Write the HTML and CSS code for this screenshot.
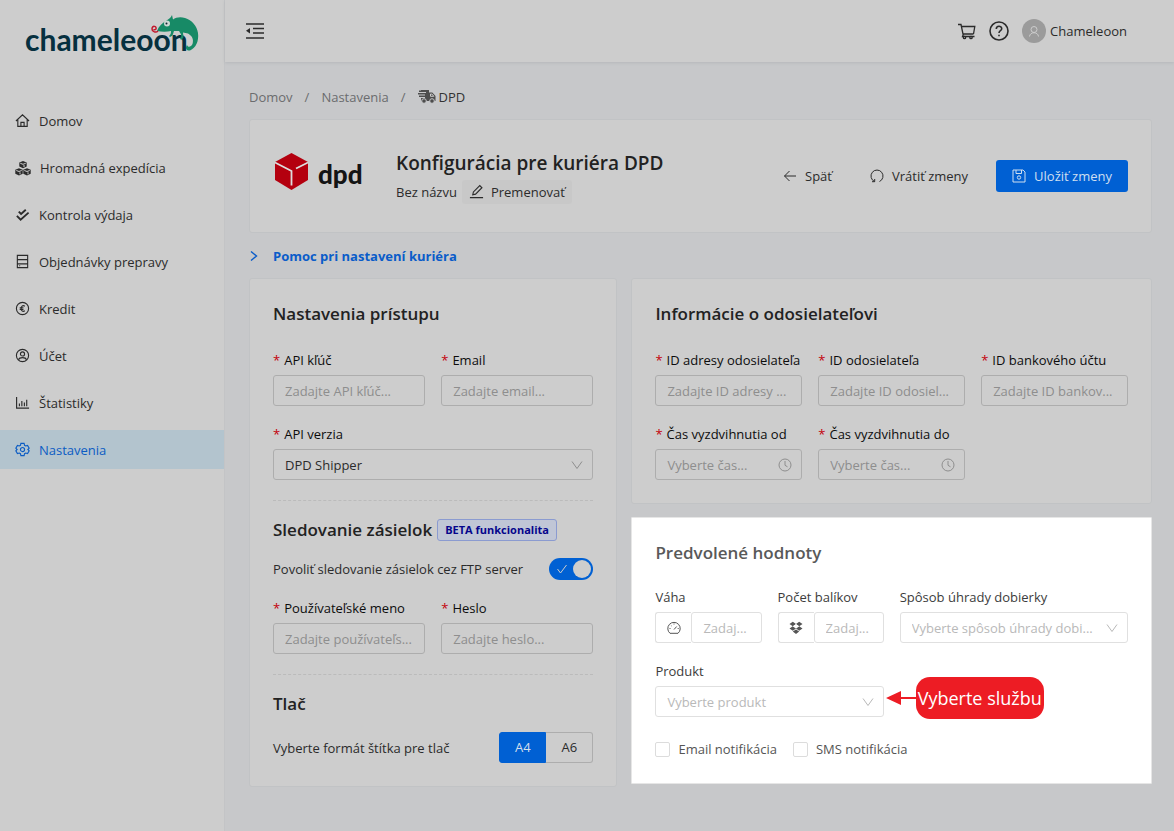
FILE: index.html
```html
<!DOCTYPE html>
<html lang="sk">
<head>
<meta charset="utf-8">
<meta name="viewport" content="width=device-width, initial-scale=1">
<title>Chameleoon – DPD</title>
<link rel="stylesheet" href="styles.css">
</head>
<body>
<div class="app">
  <aside class="sidebar">
    <a class="brand" href="#" aria-label="chameleoon">
      <svg width="180" height="48" viewBox="0 0 180 48">
        <text class="brand-text" x="3" y="39">chameleoon</text>
        <path fill="#178a66" d="M135 19C137 14 140 11 144 9C146 7 149 6 150 3L151 7.500C154 5 159 4.500 163 6C170 8 175 14 176 21C177 29 174 36 168 38.500C164 39 163 36 165 33C166 36 169 35 170.500 32C172 27 170 24 166 21.500L161 20.500C161 24 163 25 159 28L158 26C161 24 158 21 157 19L152 19C151 22 151 24 148 25L147 24C149 22 149 21 149 19C145 20 140 20 135 19Z"/>
        <circle cx="145" cy="11.500" r="3" fill="#cdd8d3" stroke="none"/><circle cx="144.500" cy="11.500" r="1" fill="#123" stroke="none"/>
        <path fill="none" stroke="#c2182c" stroke-width="1.500" d="M136 19C134 21 130 20 130 17C130 13 135 14 134 17C133 18 132 18 132 17"/>
      </svg>
    </a>
    <nav class="menu">
      <a href="#"><svg class="icon" viewBox="0 0 16 16"><path d="M1 8.500 8 2l7 6.500M3 7v7.300h10V7M6.300 14.300V10h3.400v4.300"/></svg>Domov</a>
      <a href="#"><svg class="icon icon-cubes" viewBox="0 0 16 16"><path class="solid" d="m8 1 3.700 1.500v4L8 8.200 4.300 6.500v-4zM4 8.200l3.700 1.500v4L4 15.400.3 13.700v-4zm8 0 3.700 1.500v4L12 15.400l-3.700-1.700v-4z"/><path class="cut" d="m5.300 3.300 2.700 1 2.700-1M9 5v2M1.300 10.500l2.700 1 2.700-1M5 12.300v2m4.300-3.800 2.700 1 2.700-1M13 12.300v2"/></svg>Hromadná expedícia</a>
      <a href="#"><svg class="icon" viewBox="0 0 16 16"><path class="bold" d="m4 5 2.500 2.500L11.500 3M2 9.500l4 4L14.500 6"/></svg>Kontrola výdaja</a>
      <a href="#"><svg class="icon" viewBox="0 0 16 16"><path d="M2.500 1.500h11v13h-11zM2.500 6h11M2.500 10.500h11M4.500 12.500h1"/></svg>Objednávky prepravy</a>
      <a href="#"><svg class="icon" viewBox="0 0 16 16"><circle cx="8" cy="8" r="6.500"/><path d="M10.500 5.500C8 4 6.500 6 6.500 8s1.500 4 4 2.500M5 7.300h4M5 9h4"/></svg>Kredit</a>
      <a href="#"><svg class="icon" viewBox="0 0 16 16"><circle cx="8" cy="8" r="6.500"/><circle cx="8" cy="6.300" r="2.200"/><path d="M3.700 12.500c1-3 7.600-3 8.600 0"/></svg>Účet</a>
      <a href="#"><svg class="icon" viewBox="0 0 16 16"><path d="M1.700 2v12H15M4.700 12V9M7.300 12V6.500M10 12V8M12.500 12V5"/></svg>Štatistiky</a>
      <a href="#" class="active" aria-current="page"><svg class="icon" viewBox="0 0 16 16"><path d="M6.300 1.500h3.400l.5 2 1.200.7 2-.6 1.700 2.900L13.700 8l1.400 1.500-1.700 2.900-2-.6-1.200.7-.5 2H6.300l-.5-2-1.200-.7-2 .6L.9 9.500 2.300 8 .9 6.500l1.700-2.900 2 .6 1.200-.7z"/><circle cx="8" cy="8" r="2.200"/></svg>Nastavenia</a>
    </nav>
  </aside>

  <div class="page">
    <header class="topbar">
      <button class="plain" type="button" aria-label="Zbaliť menu"><svg class="fold" viewBox="0 0 18 16"><path d="M0 1h18M7 5.500h11M7 10h11M0 15h18"/><path class="solid" d="M0 7.800 4 5v5.600z"/></svg></button>
      <div class="tools">
        <button class="plain" type="button" aria-label="Košík"><svg class="cart" viewBox="0 0 18 18"><path d="M0 2.500h3l2 9.500h10.500M3.500 4.500h13.300l-1.300 7.500M5.500 12l-1 2.500h12"/><circle cx="6.500" cy="15.500" r="1.200"/><circle cx="13" cy="15.500" r="1.200"/></svg></button>
        <button class="plain" type="button" aria-label="Pomoc"><svg class="help" viewBox="0 0 20 20"><circle cx="10" cy="10" r="9"/><path d="M7.300 8c0-3.700 5.400-3.500 5.400-.3 0 2-2.700 2-2.700 4.300M10 13.700v1.500"/></svg></button>
        <a class="user" href="#"><svg class="avatar" viewBox="0 0 24 24"><circle class="disc" cx="12" cy="12" r="12"/><circle cx="12" cy="10.500" r="3"/><path d="M7.500 17.500c.5-5 8.500-5 9 0"/></svg>Chameleoon</a>
      </div>
    </header>

    <main class="content">
      <nav class="crumbs" aria-label="Omrvinky">
        <a href="#">Domov</a><span>/</span><a href="#">Nastavenia</a><span>/</span>
        <strong><svg class="truck" viewBox="0 0 18 14"><path class="solid" d="M3 0h8v2.500h3.300L17.500 6v5H3V8h4V7H1V5.500h6v-1H0V3h8V2H1V.500h2z"/><circle class="wheel" cx="6" cy="11" r="2.300"/><circle class="wheel" cx="14" cy="11" r="2.300"/><path class="cut" d="M12.500 4h1.300l2 2.300h-3.300z"/></svg>DPD</strong>
      </nav>

      <section class="card intro">
        <svg class="dpd" width="94" height="48" viewBox="0 0 94 48">
          <path fill="#b4000f" stroke="none" d="m18.500 1 16.500 9v18l-16.500 10L2 28V10z"/>
          <path fill="none" stroke="#ddd" stroke-width="1.800" d="m2 10.500 16.500 8.500v14.500M23 16.500l12-6"/>
          <text class="dpd-text" x="45" y="32">dpd</text>
        </svg>
        <div class="intro-text">
          <h1>Konfigurácia pre kuriéra DPD</h1>
          <div class="rename">Bez názvu <button type="button"><svg class="icon" viewBox="0 0 16 16"><path d="M1 14.500h14M4 11.500l.7-3L11.500 1.700l2.300 2.300L7 10.800z"/></svg>Premenovať</button></div>
        </div>
        <div class="actions">
          <button class="ghost" type="button"><svg class="small-icon" viewBox="0 0 14 14"><path d="M13 7H1.500M6.500 2l-5 5 5 5"/></svg>Späť</button>
          <button class="ghost" type="button"><svg class="small-icon" viewBox="0 0 14 14"><path d="M4.500 12.500A6 6 0 1 1 9.500 12.500M2 12.700h2.700V10"/></svg>Vrátiť zmeny</button>
          <button class="primary" type="button"><svg class="small-icon" viewBox="0 0 14 14"><path d="M1 1h10l2 2v10H1zM4 1v3.500h5.500V1"/><circle cx="7" cy="8.500" r="1.700"/></svg>Uložiť zmeny</button>
        </div>
      </section>

      <a class="guide" href="#"><svg viewBox="0 0 10 10"><path d="m2 .500 5.500 4.500L2 9.500"/></svg>Pomoc pri nastavení kuriéra</a>

      <div class="columns">
        <section class="card panel">
          <h2>Nastavenia prístupu</h2>
          <div class="grid two">
            <div class="field"><label class="req" for="api-key">API kľúč</label><input id="api-key" type="text" placeholder="Zadajte API kľúč..."></div>
            <div class="field"><label class="req" for="email">Email</label><input id="email" type="text" placeholder="Zadajte email..."></div>
            <div class="field wide"><label class="req" for="api-version">API verzia</label>
              <div class="control"><select id="api-version" class="chosen"><option>DPD Shipper</option></select><svg class="chevron" viewBox="0 0 12 12"><path d="m1 2.500 5 7 5-7"/></svg></div></div>
          </div>
          <hr>
          <h2 class="tight">Sledovanie zásielok <span class="tag">BETA funkcionalita</span></h2>
          <div class="row ftp"><label for="ftp">Povoliť sledovanie zásielok cez FTP server</label>
            <span class="toggle"><input id="ftp" type="checkbox" role="switch" checked><svg viewBox="0 0 12 12"><path d="m1.500 6 3 4 6-8"/></svg></span></div>
          <div class="grid two">
            <div class="field"><label class="req" for="login">Používateľské meno</label><input id="login" type="text" placeholder="Zadajte používateľs..."></div>
            <div class="field"><label class="req" for="pass">Heslo</label><input id="pass" type="password" placeholder="Zadajte heslo..."></div>
          </div>
          <hr>
          <h2 class="tight">Tlač</h2>
          <div class="row"><span>Vyberte formát štítka pre tlač</span>
            <div class="segments"><label><input type="radio" name="format" checked>A4</label><label><input type="radio" name="format">A6</label></div></div>
        </section>

        <div class="stack">
          <section class="card panel">
            <h2>Informácie o odosielateľovi</h2>
            <div class="grid three">
              <div class="field"><label class="req" for="addr">ID adresy odosielateľa</label><input id="addr" type="text" placeholder="Zadajte ID adresy ..."></div>
              <div class="field"><label class="req" for="sender">ID odosielateľa</label><input id="sender" type="text" placeholder="Zadajte ID odosiel..."></div>
              <div class="field"><label class="req" for="bank">ID bankového účtu</label><input id="bank" type="text" placeholder="Zadajte ID bankov..."></div>
              <div class="field"><label class="req" for="from">Čas vyzdvihnutia od</label>
                <div class="control"><input id="from" type="text" placeholder="Vyberte čas..."><svg class="clock" viewBox="0 0 14 14"><circle cx="7" cy="7" r="6"/><path d="M7 3v4.300l2.500 1.500"/></svg></div></div>
              <div class="field"><label class="req" for="to">Čas vyzdvihnutia do</label>
                <div class="control"><input id="to" type="text" placeholder="Vyberte čas..."><svg class="clock" viewBox="0 0 14 14"><circle cx="7" cy="7" r="6"/><path d="M7 3v4.300l2.500 1.500"/></svg></div></div>
            </div>
          </section>

          <section class="card panel spotlight">
            <h2>Predvolené hodnoty</h2>
            <div class="grid four">
              <div class="field"><label for="weight">Váha</label>
                <div class="addon"><span><svg class="small-icon" viewBox="0 0 14 14"><path d="M3 12.300a6.200 6.200 0 1 1 8 0zM7 8.500l2.700-3M7 2.500v1M2.500 7.500h1M10.700 7.500h1M3.900 4.300l.6.600"/></svg></span><input id="weight" type="text" placeholder="Zadaj..."></div></div>
              <div class="field"><label for="count">Počet balíkov</label>
                <div class="addon"><span><svg class="small-icon" viewBox="0 0 14 14"><path class="solid" d="M3.800.8 7 3 3.800 5.200.5 3zM10.200.8 13.500 3l-3.300 2.200L7 3zM.5 7.500l3.300-2.200L7 7.500 3.800 9.700zM13.500 7.500l-3.300-2.200L7 7.500l3.200 2.200zM3.800 10.600 7 8.500l3.200 2.100L7 13z"/><path class="hole" d="m7 3.300 3 2L7 7.300 4 5.300z"/></svg></span><input id="count" type="text" placeholder="Zadaj..."></div></div>
              <div class="field wide"><label for="cod">Spôsob úhrady dobierky</label>
                <div class="control"><select id="cod"><option>Vyberte spôsob úhrady dobi...</option></select><svg class="chevron" viewBox="0 0 12 12"><path d="m1 2.500 5 7 5-7"/></svg></div></div>
              <div class="field wide"><label for="product">Produkt</label>
                <div class="control"><select id="product"><option>Vyberte produkt</option></select><svg class="chevron" viewBox="0 0 12 12"><path d="m1 2.500 5 7 5-7"/></svg>
                  <div class="callout"><svg viewBox="0 0 30 14"><path fill="#ed1c24" d="M0 7 15 0v6h15v2H15v6z"/></svg><span>Vyberte službu</span></div></div></div>
            </div>
            <div class="checks"><label><input type="checkbox">Email notifikácia</label><label><input type="checkbox">SMS notifikácia</label></div>
          </section>
        </div>
      </div>
    </main>
  </div>
</div>
</body>
</html>
```
FILE: styles.css
```css
:root {
  --surface: #cdcdcd;
  --ground: #c7c8ca;
  --line: #adadad;
  --edge: #c1c3c5;
  --text: #2b2b2b;
  --hint: #8e8e8e;
  --blue: #0060d3;
}
* { box-sizing: border-box; }
body { margin: 0; background: var(--ground); color: var(--text); font: 13px/22px "Open Sans", "Noto Sans", sans-serif; }
a { color: inherit; text-decoration: none; }
button, input, select { font: inherit; color: inherit; }
button { cursor: pointer; }
h1, h2 { margin: 0; font-weight: 600; color: #222; }
svg { flex: none; fill: none; stroke: currentColor; }
svg .solid { fill: currentColor; stroke: none; }
svg .cut { stroke: var(--surface); fill: none; }
svg .bold { stroke-width: 2; }
.icon { width: 15px; height: 15px; stroke-width: 1.2; }
.small-icon { width: 14px; height: 14px; }

.app { display: flex; min-height: 100vh; }
.sidebar { flex: 0 0 225px; background: var(--surface); border-right: 1px solid #c3c4c6; }
.brand { display: block; height: 101px; padding: 12px 22px; }
.brand svg { display: block; stroke: none; }
.brand-text { font: 700 30px Lato, sans-serif; fill: #06303f; }
.menu { display: flex; flex-direction: column; gap: 8px; }
.menu a { display: flex; align-items: center; gap: 9px; height: 39px; padding: 0 15px; }
.menu .icon-cubes { width: 16px; height: 16px; stroke-width: 1; }
.menu .active { background: #b3c4ce; color: #0b5cc4; }

.page { flex: 1; min-width: 0; }
.topbar { display: flex; align-items: center; justify-content: space-between; height: 62px; padding: 0 47px 0 21px; background: var(--surface); box-shadow: 0 1px 3px #b5b7ba; }
.plain { display: flex; padding: 0; border: 0; background: none; }
.fold { width: 18px; height: 16px; stroke-width: 1.6; }
.tools { display: flex; align-items: center; gap: 13px; }
.cart { width: 18px; height: 18px; stroke-width: 1.3; }
.help { width: 20px; height: 20px; stroke-width: 1.6; }
.user { display: flex; align-items: center; gap: 4px; }
.avatar { width: 24px; height: 24px; color: #cdcdcd; }
.avatar .disc { fill: #9b9b9b; stroke: none; }

.content { padding: 24px 22px 24px 24px; }
.crumbs { display: flex; gap: 12px; color: #6b6c6e; }
.crumbs strong { display: flex; align-items: center; gap: 3px; font-weight: 400; color: #333; }
.truck { width: 18px; height: 14px; color: #4d4d4d; }
.truck .wheel { fill: currentColor; stroke: var(--ground); }
.card { background: var(--surface); border: 1px solid var(--edge); border-radius: 3px; }
.intro { display: flex; align-items: center; min-height: 114px; margin-top: 11px; padding: 24px 23px; }
.dpd-text { font: 900 26px Lato, sans-serif; fill: #141414; stroke: none; }
.intro-text { margin-left: 29px; }
h1 { font-size: 19px; line-height: 28px; }
.rename { display: flex; align-items: center; gap: 5px; margin-top: 3px; }
.rename button { display: flex; align-items: center; gap: 7px; height: 24px; padding: 0 7px; border: 0; border-radius: 3px; background: #c8c8c8; }
.actions { display: flex; align-items: center; gap: 8px; margin-left: auto; }
.actions button { display: flex; align-items: center; gap: 8px; height: 32px; padding: 0 15px; border: 0; border-radius: 3px; background: none; }
.actions .primary { margin-left: 5px; padding: 0 16px; background: var(--blue); color: #cfdff0; }
.guide { display: inline-flex; align-items: center; gap: 14px; margin: 12px 0 11px; color: #0a5cc9; font-weight: 700; }
.guide svg { width: 10px; height: 10px; stroke-width: 1.4; }

.columns { display: grid; grid-template-columns: 368fr 520fr; gap: 14px; align-items: start; }
.stack { display: grid; gap: 13px; }
.panel { padding: 23px; }
h2 { display: flex; align-items: center; gap: 5px; margin-bottom: 23px; font-size: 17px; line-height: 24px; white-space: nowrap; }
h2.tight { margin-bottom: 16px; }
.grid { display: grid; gap: 17px 16px; }
.two { grid-template-columns: repeat(2, minmax(0, 1fr)); }
.three { grid-template-columns: repeat(3, minmax(0, 1fr)); }
.four { grid-template-columns: repeat(4, minmax(0, 1fr)); }
.wide { grid-column: span 2; }
.field { display: flex; flex-direction: column; gap: 4px; min-width: 0; }
.field label { color: #0c0c0c; white-space: nowrap; }
.req::before { content: "*"; margin-right: 4px; color: #c4000a; }
.field input, .field select { width: 100%; height: 31px; padding: 0 11px; border: 1px solid var(--line); border-radius: 3px; background: transparent; appearance: none; color: var(--hint); }
.field input::placeholder { color: var(--hint); opacity: 1; }
.field select.chosen { color: var(--text); }
.control { position: relative; }
.chevron, .clock { position: absolute; right: 10px; top: 50%; width: 12px; height: 12px; margin-top: -6px; color: var(--hint); pointer-events: none; }
.clock { width: 14px; height: 14px; margin-top: -7px; }
hr { height: 1px; margin: 20px 0 17px; border: 0; border-top: 1px dashed #bbb; }
.tag { padding: 0 7px; border: 1px solid #8b9bd0; border-radius: 3px; background: #c0c6d6; color: #05058c; font-size: 11px; line-height: 20px; font-weight: 700; }
.row { display: flex; align-items: center; justify-content: space-between; }
.ftp { margin: 16px 0 17px; }
.toggle { position: relative; display: flex; }
.toggle input { appearance: none; width: 44px; height: 22px; margin: 0; border-radius: 11px; background: var(--blue); }
.toggle input::after { content: ""; display: block; width: 18px; height: 18px; margin: 2px 2px 2px auto; border-radius: 50%; background: #cdcdcd; }
.toggle svg { position: absolute; left: 7px; top: 5px; width: 12px; height: 12px; color: #cdcdcd; pointer-events: none; }
.segments { display: flex; }
.segments label { width: 47px; height: 31px; border: 1px solid var(--line); line-height: 29px; text-align: center; }
.segments label:first-child { border-radius: 3px 0 0 3px; }
.segments label:last-child { border-left: 0; border-radius: 0 3px 3px 0; }
.segments label:has(:checked) { border-color: var(--blue); background: var(--blue); color: #d5dfeb; }
.segments input { position: absolute; appearance: none; margin: 0; }

.spotlight { --surface: #fff; --line: #e0e0e0; --hint: #b9b9b9; border-color: #e6e6e6; border-radius: 1px; color: #555; }
.spotlight h2 { margin-bottom: 21px; color: #595959; }
.spotlight .field label { color: #3c3c3c; }
.addon { display: flex; }
.addon span { display: flex; flex: 0 0 36px; align-items: center; justify-content: center; border: 1px solid var(--line); border-right: 0; border-radius: 3px 0 0 3px; }
.addon .hole { fill: #fff; stroke: none; }
.callout { position: absolute; left: calc(100% + 2px); top: -9px; display: flex; align-items: center; height: 42px; }
.callout svg { width: 30px; height: 14px; stroke: none; }
.callout span { padding: 0 2px; border-radius: 14px; background: #ed1c24; color: #fff; font-size: 18px; line-height: 42px; white-space: nowrap; }
.checks { display: flex; gap: 16px; margin-top: 21px; }
.checks label { display: flex; align-items: center; gap: 8px; }
.checks input { appearance: none; width: 15px; height: 15px; margin: 0; border: 1px solid #dcdcdc; border-radius: 2px; }
```
